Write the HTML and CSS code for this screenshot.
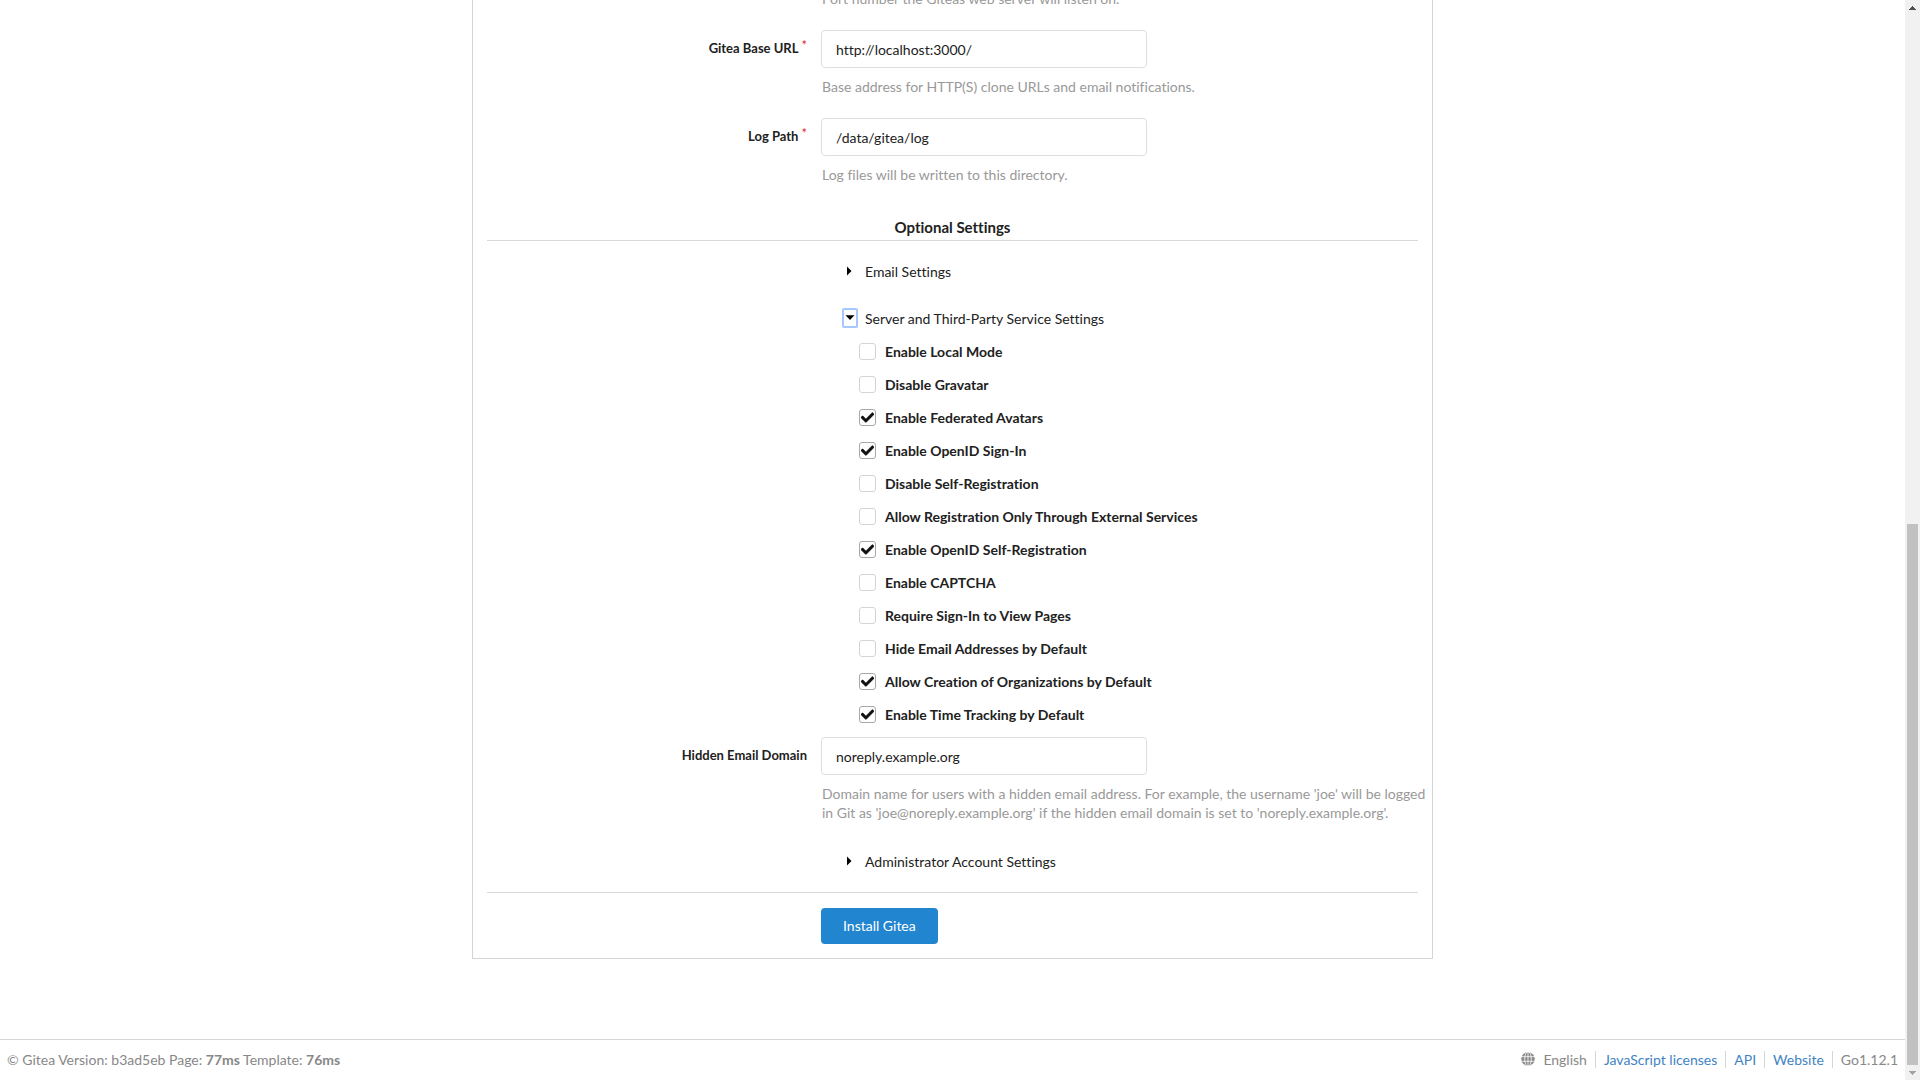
FILE: index.html
```html
<!DOCTYPE html>
<html lang="en">
<head>
  <meta charset="utf-8">
  <title>Installation - Gitea</title>
  <link rel="stylesheet" href="styles.css">
</head>
<body>
  <svg class="sprite" aria-hidden="true">
    <symbol id="check" viewBox="0 0 512 512"><path d="M173.898 439.404l-166.4-166.4c-9.997-9.997-9.997-26.206 0-36.204l36.203-36.204c9.997-9.998 26.207-9.998 36.204 0L192 312.69 432.095 72.596c9.997-9.997 26.207-9.997 36.204 0l36.203 36.204c9.997 9.997 9.997 26.206 0 36.204l-294.4 294.401c-9.998 9.997-26.207 9.997-36.204-.001z"/></symbol>
    <symbol id="caret-right" viewBox="0 0 16 20"><path d="M5 5.500v9l4.500-4.500z"/></symbol>
    <symbol id="caret-down" viewBox="0 0 16 20"><path d="M3.500 7.200h9l-4.500 4.800z"/></symbol>
  </svg>

  <div class="page">
    <main class="install">
      <form class="form">
        <div class="field">
          <p class="help">Port number the Giteas web server will listen on.</p>
        </div>
        <div class="field">
          <label class="label required" for="app_url">Gitea Base URL</label>
          <input class="input" id="app_url" type="text" value="http://localhost:3000/">
          <p class="help">Base address for HTTP(S) clone URLs and email notifications.</p>
        </div>
        <div class="field">
          <label class="label required" for="log_path">Log Path</label>
          <input class="input" id="log_path" type="text" value="/data/gitea/log">
          <p class="help">Log files will be written to this directory.</p>
        </div>

        <h4 class="heading">Optional Settings</h4>

        <details class="section">
          <summary class="summary"><svg class="caret"><use href="#caret-right"/></svg>Email Settings</summary>
        </details>

        <details class="section" open>
          <summary class="summary"><svg class="caret focused"><use href="#caret-down"/></svg>Server and Third-Party Service Settings</summary>
          <div class="options">
            <label class="option"><input type="checkbox"><svg class="tick"><use href="#check"/></svg>Enable Local Mode</label>
            <label class="option"><input type="checkbox"><svg class="tick"><use href="#check"/></svg>Disable Gravatar</label>
            <label class="option"><input type="checkbox" checked><svg class="tick"><use href="#check"/></svg>Enable Federated Avatars</label>
            <label class="option"><input type="checkbox" checked><svg class="tick"><use href="#check"/></svg>Enable OpenID Sign-In</label>
            <label class="option"><input type="checkbox"><svg class="tick"><use href="#check"/></svg>Disable Self-Registration</label>
            <label class="option"><input type="checkbox"><svg class="tick"><use href="#check"/></svg>Allow Registration Only Through External Services</label>
            <label class="option"><input type="checkbox" checked><svg class="tick"><use href="#check"/></svg>Enable OpenID Self-Registration</label>
            <label class="option"><input type="checkbox"><svg class="tick"><use href="#check"/></svg>Enable CAPTCHA</label>
            <label class="option"><input type="checkbox"><svg class="tick"><use href="#check"/></svg>Require Sign-In to View Pages</label>
            <label class="option"><input type="checkbox"><svg class="tick"><use href="#check"/></svg>Hide Email Addresses by Default</label>
            <label class="option"><input type="checkbox" checked><svg class="tick"><use href="#check"/></svg>Allow Creation of Organizations by Default</label>
            <label class="option"><input type="checkbox" checked><svg class="tick"><use href="#check"/></svg>Enable Time Tracking by Default</label>
          </div>
          <div class="field">
            <label class="label" for="no_reply_address">Hidden Email Domain</label>
            <input class="input" id="no_reply_address" type="text" value="noreply.example.org">
            <p class="help">Domain name for users with a hidden email address. For example, the username 'joe' will be logged in Git as 'joe@noreply.example.org' if the hidden email domain is set to 'noreply.example.org'.</p>
          </div>
        </details>

        <details class="section">
          <summary class="summary"><svg class="caret"><use href="#caret-right"/></svg>Administrator Account Settings</summary>
        </details>

        <div class="actions">
          <button class="button" type="submit">Install Gitea</button>
        </div>
      </form>
    </main>

    <footer class="footer">
      <div>© Gitea Version: b3ad5eb Page: <strong>77ms</strong> Template: <strong>76ms</strong></div>
      <div class="links">
        <span class="language">
          <svg class="globe" viewBox="0 0 14 14">
            <circle cx="7" cy="7" r="6.800" fill="#888"/>
            <g fill="none" stroke="#fff" stroke-width=".8"><path d="M7 0v14M0 4.700h14M0 9.300h14"/><ellipse cx="7" cy="7" rx="3.300" ry="7.500"/></g>
          </svg>
          English
        </span>
        <a href="#licenses">JavaScript licenses</a>
        <a href="#api">API</a>
        <a href="#website">Website</a>
        <span>Go1.12.1</span>
      </div>
    </footer>
  </div>

  <div class="scrollbar" aria-hidden="true">
    <svg class="arrow up" viewBox="0 0 7 4"><path d="M3 0h1v1h1v1h1v1h1v1H0V3h1V2h1V1h1z"/></svg>
    <div class="thumb"></div>
    <svg class="arrow down" viewBox="0 0 7 4"><path d="M0 0h7v1H6v1H5v1H4v1H3V3H2V2H1V1H0z"/></svg>
  </div>
</body>
</html>
```
FILE: styles.css
```css
* {
  box-sizing: border-box;
}

body {
  display: flex;
  height: 100vh;
  margin: 0;
  overflow: hidden;
  background: #fff;
  color: #212121;
  font: 14px/19px Lato, "Liberation Sans", sans-serif;
  font-variant-ligatures: none;
}

.sprite {
  display: none;
}

/* The view rests at the end of the page, so content is anchored to the bottom. */
.page {
  display: flex;
  flex: 1;
  flex-direction: column;
  justify-content: flex-end;
  min-width: 0;
}

.install {
  flex-shrink: 0;
  width: 100%;
  max-width: 961px;
  margin: 0 auto 80px;
  padding: 14px;
  border: 1px solid #d4d4d5;
}

.field {
  display: grid;
  grid-template-columns: 320px minmax(0, 1fr);
  column-gap: 14px;
  row-gap: 9px;
  margin-bottom: 22px;
}

.label {
  padding-top: 9px;
  font-size: 13px;
  font-weight: 700;
  text-align: right;
}

.required::after {
  content: "*";
  margin-left: 3px;
  color: #db2828;
  font-weight: 400;
  line-height: 0;
  vertical-align: 3px;
}

.input {
  width: 100%;
  max-width: 326px;
  height: 38px;
  padding: 1px 14px 0;
  border: 1px solid #dededf;
  border-radius: 4px;
  background: #fff;
  color: inherit;
  font: inherit;
}

.help {
  grid-column: 2;
  margin: 0 -12px 0 0;
  padding-left: 1px;
  color: #999;
}

.heading {
  margin: 34px 0 20px;
  padding-bottom: 3px;
  border-bottom: 1px solid #d9d9da;
  font-size: 15px;
  font-weight: 700;
  text-align: center;
}

.section {
  margin-bottom: 27px;
}

.section .field {
  margin-bottom: 29px;
}

.section:last-of-type {
  margin-bottom: 21px;
}

.summary {
  display: flex;
  align-items: center;
  gap: 7px;
  height: 20px;
  padding-left: 355px;
  list-style: none;
  cursor: pointer;
}

.caret {
  width: 16px;
  height: 20px;
}

.focused {
  border-radius: 2px;
  box-shadow: inset 0 0 0 2px #a6c8ff;
}

.options {
  display: grid;
  gap: 16px;
  padding: 14px 0 15px 372px;
}

.option {
  display: grid;
  grid-template-columns: 17px 1fr;
  align-items: center;
  column-gap: 9px;
  height: 17px;
  font-weight: 700;
}

.option input {
  grid-area: 1 / 1;
  width: 17px;
  height: 17px;
  margin: 0;
  border: 1px solid #d4d4d5;
  border-radius: 3px;
  background: #fff;
  appearance: none;
}

.option input:checked {
  border-color: #a8a8a8;
}

.tick {
  grid-area: 1 / 1;
  visibility: hidden;
  justify-self: center;
  width: 13px;
  height: 13px;
  fill: #111;
  stroke: #111;
  stroke-width: 20px;
  pointer-events: none;
}

.option input:checked + .tick {
  visibility: visible;
}

.actions {
  padding: 15px 0 0 334px;
  border-top: 1px solid #d9d9da;
}

.button {
  display: block;
  height: 36px;
  padding: 0 22px 2px;
  border: 0;
  border-radius: 4px;
  background: #2185d0;
  color: #fff;
  font: inherit;
}

.footer {
  display: flex;
  flex-shrink: 0;
  align-items: center;
  justify-content: space-between;
  height: 41px;
  padding: 0 7px 2px;
  border-top: 1px solid #d6d6d6;
  color: #888;
}

.links {
  display: flex;
  align-items: center;
}

.links > * {
  line-height: 17px;
}

.links > * + * {
  margin-left: 8px;
  padding-left: 8px;
  border-left: 1px solid #d6d6d6;
}

.links a {
  color: #4183c4;
  text-decoration: none;
}

.language {
  display: flex;
  align-items: center;
  gap: 8px;
}

.globe {
  width: 14px;
  height: 14px;
}

.scrollbar {
  display: grid;
  grid-template-rows: 15px 509fr 541fr 15px;
  justify-items: center;
  width: 15px;
  background: #f1f1f1;
}

.thumb {
  grid-row: 3;
  width: 11px;
  background: #c1c1c1;
}

.arrow {
  align-self: center;
  width: 7px;
  height: 4px;
}

.up {
  grid-row: 1;
  fill: #505050;
}

.down {
  grid-row: 4;
  fill: #a3a3a3;
}
```
